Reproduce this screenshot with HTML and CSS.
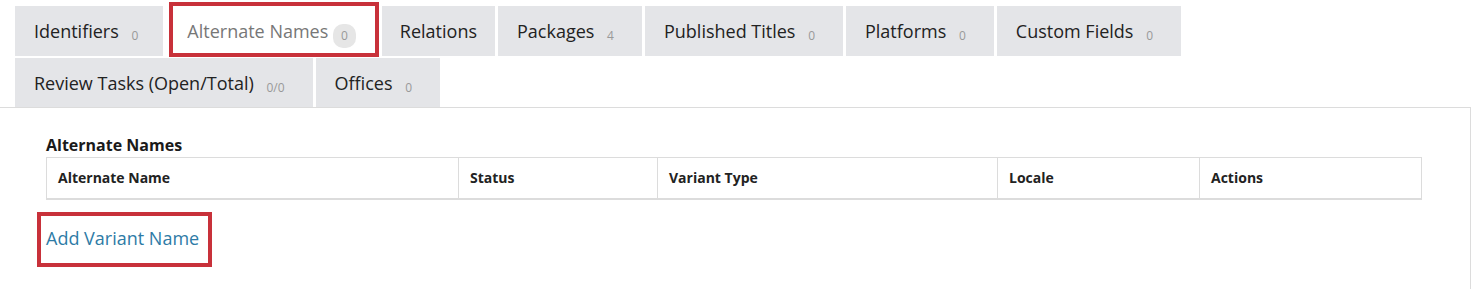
FILE: index.html
```html
<!DOCTYPE html>
<html lang="en">
<head>
  <meta charset="UTF-8"/>
  <title>Alternate Names</title>
  <link rel="stylesheet" href="styles.css">
</head>
<body>
  <ul class="nav-tabs">
    <li class="tab"><a href="#">Identifiers <span class="badge">0</span></a></li>
    <li class="tab active"><a href="#">Alternate Names <span class="badge">0</span></a></li>
    <li class="tab"><a href="#">Relations</a></li>
    <li class="tab"><a href="#">Packages <span class="badge">4</span></a></li>
    <li class="tab"><a href="#">Published Titles <span class="badge">0</span></a></li>
    <li class="tab"><a href="#">Platforms <span class="badge">0</span></a></li>
    <li class="tab"><a href="#">Custom Fields <span class="badge">0</span></a></li>
    <li class="tab"><a href="#">Review Tasks (Open/Total) <span class="badge">0/0</span></a></li>
    <li class="tab"><a href="#">Offices <span class="badge">0</span></a></li>
  </ul>

  <div class="tab-content">
    <h4 class="section-title">Alternate Names</h4>
    <table class="names-table">
      <thead>
        <tr>
          <th class="col-name">Alternate Name</th>
          <th class="col-status">Status</th>
          <th class="col-type">Variant Type</th>
          <th class="col-locale">Locale</th>
          <th class="col-actions">Actions</th>
        </tr>
      </thead>
      <tbody></tbody>
    </table>
    <span class="highlight-box"><a href="#" class="add-link">Add Variant Name</a></span>
  </div>
</body>
</html>
```

FILE: styles.css
```css
* {
  margin: 0;
  padding: 0;
  box-sizing: border-box;
}

body {
  font-family: 'Open Sans', sans-serif;
  color: #333;
  background: #fff;
  width: 1481px;
}

a {
  text-decoration: none;
}

/* Tabs */
.nav-tabs {
  list-style: none;
  display: flex;
  flex-wrap: wrap;
  padding: 6px 0 0 15px;
  width: 1440px;
}

.tab {
  background-color: #e4e5e8;
  margin: 0 3px 1px 0;
  height: 50px;
}

.tab a {
  display: block;
  height: 100%;
  padding: 0 20px 0 19px;
  line-height: 50px;
  font-size: 18px;
  color: #222;
}

.tab:first-child a {
  padding-right: 17px;
}

.tab:nth-child(3) a {
  padding: 0 18px;
}

.tab:nth-child(n+8) {
  height: 49px;
  margin-bottom: 0;
}

.badge {
  display: inline-block;
  font-size: 12px;
  color: #999;
  padding: 0 8px;
  line-height: 20px;
  border-radius: 10px;
  vertical-align: -2px;
}

.tab.active {
  background: #fff;
  border: 4px solid #c8313a;
  margin-left: 3px;
  margin-top: -4px;
  height: 55px;
}

.tab.active a {
  padding: 0 19px 0 14px;
  line-height: 51px;
  color: #777;
}

.tab.active .badge {
  background: #e6e6e6;
  line-height: 24px;
  padding: 0 8px;
}

/* Panel */
.tab-content {
  border-top: 1px solid #dcdcdc;
  border-right: 1px solid #dcdcdc;
  width: 1471px;
  height: 182px;
  padding: 26px 0 0 46px;
}

.section-title {
  font-size: 16px;
  font-weight: 700;
  color: #1a1a1a;
  line-height: 22px;
  margin-bottom: 1px;
}

.names-table {
  border-collapse: collapse;
  width: 1376px;
  border: 1px solid #dcdcdc;
  border-bottom: 2px solid #dcdcdc;
}

.names-table th {
  text-align: left;
  font-size: 14px;
  font-weight: 700;
  color: #222;
  height: 41px;
  padding: 0 11px;
  border-right: 1px solid #dcdcdc;
}

.col-name { width: 412px; }
.col-status { width: 199px; }
.col-type { width: 340px; }
.col-locale { width: 202px; }

.highlight-box {
  display: inline-block;
  margin: 12px 0 0 -9px;
  border: 4px solid #c8313a;
  padding: 9px 9px 12px 5px;
}

.add-link {
  font-size: 18px;
  line-height: 26px;
  color: #2e7ba6;
}
```
